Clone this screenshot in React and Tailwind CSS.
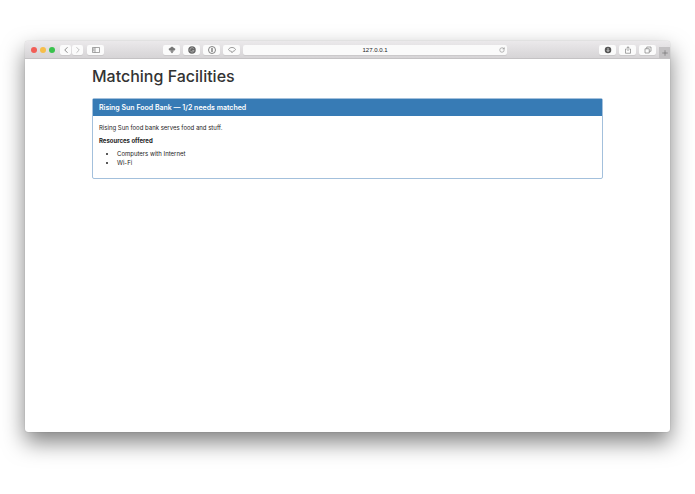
import React from 'react';
import { ChevronLeft, ChevronRight, RotateCw, Plus } from 'lucide-react';

const resources = ['Computers with Internet', 'Wi-Fi'];

function ToolButton({ label, className = 'w-[17px]', children }) {
  return (
    <button
      type="button"
      aria-label={label}
      className={`h-[10px] shrink-0 rounded-[2px] bg-[#fbfbfb] text-[#777] shadow-[0_1px_0_#cbc9cb] flex items-center justify-center ${className}`}
    >
      {children}
    </button>
  );
}

function Toolbar() {
  return (
    <header className="h-[18px] shrink-0 flex items-center rounded-t-[3px] border-b border-[#c4c2c4] bg-linear-to-b from-[#ebe9eb] to-[#d6d4d6]">
      {/* Window controls and history */}
      <div className="w-[138px] shrink-0 flex items-center pl-[6px]">
        <div className="flex gap-[3px]">
          <span className="size-[6px] rounded-full bg-[#f25e57]" />
          <span className="size-[6px] rounded-full bg-[#f6be4a]" />
          <span className="size-[6px] rounded-full bg-[#39c24c]" />
        </div>
        <div className="flex gap-px ml-[5px]">
          <ToolButton label="Back" className="w-[11px]">
            <ChevronLeft size={10} strokeWidth={2} />
          </ToolButton>
          <ToolButton label="Forward" className="w-[11px]">
            <ChevronRight size={10} strokeWidth={2} className="text-[#b5b5b5]" />
          </ToolButton>
        </div>
        <div className="ml-1">
          <ToolButton label="Show sidebar">
            <svg width="8" height="6" viewBox="0 0 16 12" fill="none" stroke="currentColor" strokeWidth="1.3">
              <path d="M1 1h14v10H1zM6 1v10M2.5 3.5h2M2.5 5.5h2M2.5 7.5h2" />
            </svg>
          </ToolButton>
        </div>
      </div>

      {/* Extensions and address */}
      <div className="flex-1 min-w-0 flex items-center gap-[3px]">
        <ToolButton label="Layers">
          <svg width="8" height="8" viewBox="0 0 16 16" fill="currentColor">
            <path d="M8 1l7 5-2 3H3L1 6z" />
            <path d="M3 9h10l-5 6z" opacity="0.6" />
            <path d="M7 7h2v7H7z" />
          </svg>
        </ToolButton>
        <ToolButton label="Grammar check">
          <svg width="8" height="8" viewBox="0 0 16 16" fill="none">
            <circle cx="8" cy="8" r="7.5" fill="#666" />
            <path d="M11.5 5.5a4.2 4.2 0 1 0 .5 3.5H8.5" stroke="#bbb" strokeWidth="1.4" />
          </svg>
        </ToolButton>
        <ToolButton label="Passwords">
          <svg width="8" height="8" viewBox="0 0 16 16" fill="none" stroke="#666">
            <circle cx="8" cy="8" r="7" strokeWidth="1.6" />
            <path d="M8 4v8" strokeWidth="2.4" />
          </svg>
        </ToolButton>
        <ToolButton label="Save page">
          <svg width="8" height="8" viewBox="0 0 16 16" fill="none" stroke="currentColor" strokeWidth="1.4">
            <path d="M1 7C2.5 4 5 3 8 3s5.5 1 7 4c-1 2.5-3 3-5 3.5L8 13.5 6.5 10.5C4 10 2 9.5 1 7z" />
          </svg>
        </ToolButton>
        <div className="relative flex-1 min-w-0 h-[10px]">
          <input
            type="text"
            aria-label="Address"
            defaultValue="127.0.0.1"
            className="block w-full h-[10px] rounded-[2px] bg-[#fafafa] text-center text-[6px] leading-[10px] text-[#222] shadow-[0_1px_0_#cbc9cb] outline-none"
          />
          <button type="button" aria-label="Reload" className="absolute right-[2px] top-[2px] text-[#777]">
            <RotateCw size={6} strokeWidth={2} className="block" />
          </button>
        </div>
      </div>

      {/* Downloads, share, tabs */}
      <div className="w-[163px] shrink-0 self-stretch flex items-center justify-end gap-[3px]">
        <ToolButton label="Downloads">
          <svg width="8" height="8" viewBox="0 0 16 16" fill="none">
            <circle cx="8" cy="8" r="6.5" fill="#555" />
            <path d="M8 4v7M5.5 8.5L8 11l2.5-2.5" stroke="#eee" strokeWidth="1.5" />
          </svg>
        </ToolButton>
        <ToolButton label="Share">
          <svg width="8" height="8" viewBox="0 0 16 16" fill="none" stroke="currentColor" strokeWidth="1.3">
            <path d="M5.5 6H3v8.5h10V6h-2.5M8 10V1.5M5.5 4L8 1.5 10.5 4" />
          </svg>
        </ToolButton>
        <ToolButton label="Show all tabs">
          <svg width="8" height="8" viewBox="0 0 16 16" fill="none" stroke="currentColor" strokeWidth="1.3">
            <path d="M2 5.5h8.5V14H2zM5.5 5.5V2H14v8.5h-3.5" />
          </svg>
        </ToolButton>
        <button
          type="button"
          aria-label="New tab"
          className="self-end w-[11px] h-[11px] bg-[#c3c1c3] text-[#707070] flex items-center justify-center"
        >
          <Plus size={8} strokeWidth={2} />
        </button>
      </div>
    </header>
  );
}

function FacilityPanel() {
  return (
    <section className="rounded-[2px] border border-[#a3c0dc] text-[#222]">
      <h2 className="h-[17px] px-[6px] bg-[#377bb5] text-white text-[7px] leading-[17px] font-semibold">
        Rising Sun Food Bank — 1/2 needs matched
      </h2>
      <div className="px-[6px] pt-[7px] pb-[11px] text-[6px] leading-[9px]">
        <p className="mb-1">Rising Sun food bank serves food and stuff.</p>
        <h3 className="mb-1 font-bold">Resources offered</h3>
        <ul className="list-disc pl-[18px]">
          {resources.map((name) => (
            <li key={name}>{name}</li>
          ))}
        </ul>
      </div>
    </section>
  );
}

function App() {
  return (
    <div className="min-h-screen flex flex-col bg-white px-[25px] pt-[41px] pb-[62px] font-['Liberation_Sans',Arial,sans-serif]">
      <div className="flex-1 flex flex-col rounded-[3px] bg-white shadow-[0_0_1px_rgba(0,0,0,0.35),0_10px_22px_rgba(0,0,0,0.5)]">
        <Toolbar />
        <main className="w-full max-w-[511px] mx-auto font-[Inter,sans-serif]">
          <h1 className="mt-[7px] mb-[12px] text-[16px] leading-[20px] font-medium text-[#333]">
            Matching Facilities
          </h1>
          <FacilityPanel />
        </main>
      </div>
    </div>
  );
}

export default App;
